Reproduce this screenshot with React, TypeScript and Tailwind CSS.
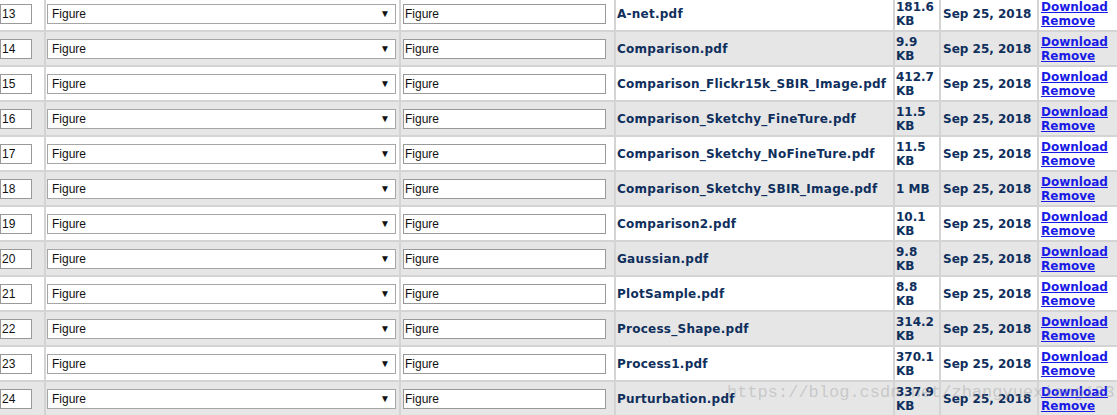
const FILES: { n: number; name: string; size: string }[] = [
  { n: 13, name: "A-net.pdf", size: "181.6 KB" },
  { n: 14, name: "Comparison.pdf", size: "9.9 KB" },
  { n: 15, name: "Comparison_Flickr15k_SBIR_Image.pdf", size: "412.7 KB" },
  { n: 16, name: "Comparison_Sketchy_FineTure.pdf", size: "11.5 KB" },
  { n: 17, name: "Comparison_Sketchy_NoFineTure.pdf", size: "11.5 KB" },
  { n: 18, name: "Comparison_Sketchy_SBIR_Image.pdf", size: "1 MB" },
  { n: 19, name: "Comparison2.pdf", size: "10.1 KB" },
  { n: 20, name: "Gaussian.pdf", size: "9.8 KB" },
  { n: 21, name: "PlotSample.pdf", size: "8.8 KB" },
  { n: 22, name: "Process_Shape.pdf", size: "314.2 KB" },
  { n: 23, name: "Process1.pdf", size: "370.1 KB" },
  { n: 24, name: "Purturbation.pdf", size: "337.9 KB" },
];

const inputFont = "font-['Liberation_Sans',Arial,sans-serif] text-[12px] text-[#111]";
const cellFont = "font-['DejaVu_Sans',Verdana,sans-serif] text-[12px] font-bold leading-[14px]";

function FileRow({ n, name, size, shaded }: { n: number; name: string; size: string; shaded: boolean }) {
  return (
    <div
      className={`grid grid-cols-[44px_355px_215px_279px_46px_98px_1fr] h-[35px] border-b-2 border-[#d4d4d4] ${
        shaded ? "bg-[#e6e6e6]" : "bg-white"
      }`}
    >
      <div className="flex items-center">
        <input
          type="text"
          defaultValue={String(n)}
          className={`w-[32px] h-[20px] border border-[#999] bg-white px-[1px] outline-none ${inputFont}`}
        />
      </div>
      <div className="flex items-center border-l-2 border-[#d4d4d4] pl-[1px]">
        <div
          className={`w-[349px] h-[20px] border border-[#a6a6a6] bg-white flex items-center justify-between pl-[4px] pr-[5px] ${inputFont}`}
        >
          <span>Figure</span>
          <span className="text-[10px] leading-none text-[#111]">▼</span>
        </div>
      </div>
      <div className="flex items-center border-l-2 border-[#d4d4d4] pl-[2px]">
        <input
          type="text"
          defaultValue="Figure"
          className={`w-[203px] h-[20px] border border-[#999] bg-white px-[1px] outline-none ${inputFont}`}
        />
      </div>
      <div className={`flex items-center border-l-2 border-[#d4d4d4] pl-[1px] tracking-[0.25px] text-[#0f2f5c] ${cellFont}`}>
        {name}
      </div>
      <div className={`flex items-center border-l-2 border-[#d4d4d4] pl-[1px] pr-[2px] text-[#0f2f5c] ${cellFont}`}>
        <span>{size}</span>
      </div>
      <div className={`flex items-center border-l-2 border-[#d4d4d4] pl-[2px] text-[#0f2f5c] whitespace-nowrap ${cellFont}`}>
        Sep 25, 2018
      </div>
      <div className={`flex flex-col justify-center border-l-2 border-[#d4d4d4] pl-[2px] text-[#1a1ae6] ${cellFont}`}>
        <a href="#" className="underline w-fit">Download</a>
        <a href="#" className="underline w-fit">Remove</a>
      </div>
    </div>
  );
}

export default function App() {
  return (
    <div className="relative w-[1117px] h-[415px] overflow-hidden bg-white">
      <div className="-mt-[3px]">
        {FILES.map((f, i) => (
          <FileRow key={f.n} {...f} shaded={i % 2 === 1} />
        ))}
      </div>
      <div className="absolute left-[727px] top-[383px] whitespace-nowrap font-['Liberation_Mono',monospace] text-[17px] leading-[20px] text-[#9a9a9a]/40 pointer-events-none">
        https://blog.csdn.net/zhangyuexiang123
      </div>
    </div>
  );
}
